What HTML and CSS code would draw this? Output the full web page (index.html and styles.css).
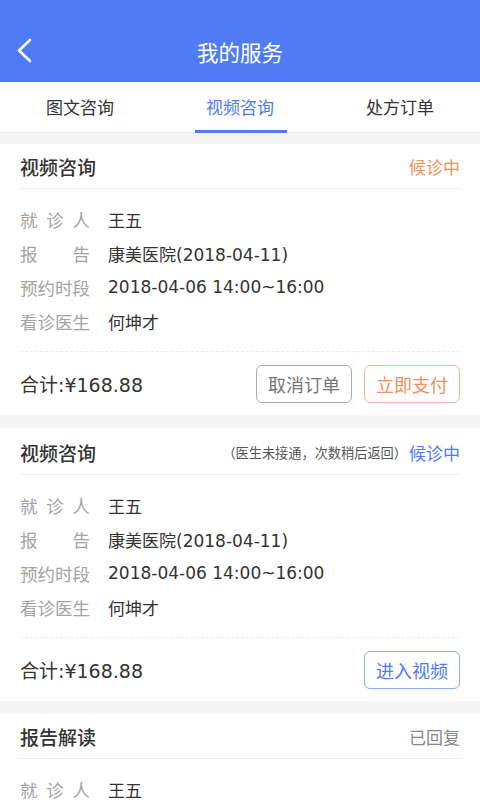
FILE: index.html
```html
<!DOCTYPE html>
<html lang="zh-CN">
<head>
<meta charset="utf-8">
<title>我的服务</title>
<link rel="stylesheet" href="styles.css">
</head>
<body>
<div class="app">
  <header class="topbar">
    <svg class="back" width="20" height="30" viewBox="0 0 20 30"><polyline points="13,2 2,12.5 13,23" fill="none" stroke="#fff" stroke-width="2.6" stroke-linecap="round" stroke-linejoin="round"/></svg>
    <h1 class="title">我的服务</h1>
  </header>
  <nav class="tabs">
    <div class="tab">图文咨询</div>
    <div class="tab active">视频咨询<span class="bar"></span></div>
    <div class="tab">处方订单</div>
  </nav>
  <main class="list">
    <section class="card">
      <div class="card-head">
        <span class="card-title">视频咨询</span>
        <span class="status orange">候诊中</span>
      </div>
      <div class="rows">
        <div class="row"><span class="label">就诊人</span><span class="value">王五</span></div>
        <div class="row"><span class="label">报告</span><span class="value">康美医院(2018-04-11)</span></div>
        <div class="row"><span class="label">预约时段</span><span class="value">2018-04-06 14:00~16:00</span></div>
        <div class="row"><span class="label">看诊医生</span><span class="value">何坤才</span></div>
      </div>
      <div class="card-foot">
        <span class="total">合计:¥168.88</span>
        <div class="btns">
          <span class="btn gray">取消订单</span>
          <span class="btn orange-btn">立即支付</span>
        </div>
      </div>
    </section>
    <section class="card">
      <div class="card-head tall">
        <span class="card-title">视频咨询</span>
        <span class="status-wrap"><span class="note">（医生未接通，次数稍后返回）</span><span class="status blue">候诊中</span></span>
      </div>
      <div class="rows">
        <div class="row"><span class="label">就诊人</span><span class="value">王五</span></div>
        <div class="row"><span class="label">报告</span><span class="value">康美医院(2018-04-11)</span></div>
        <div class="row"><span class="label">预约时段</span><span class="value">2018-04-06 14:00~16:00</span></div>
        <div class="row"><span class="label">看诊医生</span><span class="value">何坤才</span></div>
      </div>
      <div class="card-foot">
        <span class="total">合计:¥168.88</span>
        <div class="btns">
          <span class="btn blue-btn">进入视频</span>
        </div>
      </div>
    </section>
    <section class="card">
      <div class="card-head">
        <span class="card-title">报告解读</span>
        <span class="status gray-text">已回复</span>
      </div>
      <div class="rows">
        <div class="row"><span class="label">就诊人</span><span class="value">王五</span></div>
      </div>
    </section>
  </main>
</div>
</body>
</html>
```
FILE: styles.css
```css
* { box-sizing: border-box; margin: 0; padding: 0; }
html, body { width: 480px; height: 800px; overflow: hidden; }
body {
  font-family: "Noto Sans CJK SC", "Noto Sans", sans-serif;
  background: #f5f5f5;
  color: #333;
}
.app { display: flex; flex-direction: column; }
.topbar {
  height: 82px;
  background: #4f7bf6;
  display: flex;
  align-items: flex-end;
  justify-content: center;
  padding-bottom: 15px;
  position: relative;
}
.back { position: absolute; left: 17px; top: 38px; }
.title {
  font-size: 21.5px;
  font-weight: 400;
  color: #fff;
  line-height: 30px;
}
.tabs {
  height: 51px;
  background: #fff;
  display: flex;
  border-bottom: 1px solid #ebebeb;
}
.tab {
  flex: 1;
  display: flex;
  justify-content: center;
  align-items: center;
  font-size: 17px;
  color: #333;
  position: relative;
  padding-bottom: 2px;
}
.tab.active { color: #4f7bf6; }
.tab .bar {
  position: absolute;
  left: 35px;
  right: 33px;
  bottom: -1px;
  height: 3px;
  background: #4f7bf6;
}
.list {
  padding-top: 11px;
  display: flex;
  flex-direction: column;
  gap: 13px;
}
.card {
  background: #fff;
  padding: 0 20px;
}
.card-head {
  height: 45px;
  display: flex;
  justify-content: space-between;
  align-items: center;
  border-bottom: 1px solid #eeeeee;
}
.card-head.tall { height: 47px; padding-top: 3px; }
.card-title { font-size: 19px; font-weight: 500; color: #333; }
.status { font-size: 17px; }
.status-wrap { display: flex; align-items: center; }
.note { font-size: 13.2px; color: #555; margin-right: 2px; }
.orange { color: #f0915a; }
.blue { color: #4f7bf6; }
.gray-text { color: #888; }
.rows { padding: 13px 0 13px; }
.row {
  display: flex;
  align-items: center;
  height: 34px;
  font-size: 17.5px;
}
.label {
  width: 70px;
  margin-right: 18px;
  color: #a3a3a3;
  text-align: justify;
  text-align-last: justify;
}
.value {
  color: #333;
  font-family: "DejaVu Sans", "Noto Sans CJK SC", sans-serif;
  font-size: 17px;
}
.card-foot {
  height: 64px;
  border-top: 1px dashed #ececec;
  display: flex;
  justify-content: space-between;
  align-items: center;
}
.total {
  font-family: "DejaVu Sans", "Noto Sans CJK SC", sans-serif;
  font-size: 19px;
  color: #333;
}
.btns { display: flex; gap: 12px; }
.btn {
  height: 38px;
  width: 96px;
  border-radius: 6px;
  border: 1px solid #aaa;
  font-size: 18px;
  display: flex;
  align-items: center;
  justify-content: center;
  color: #777;
}
.btn.orange-btn { border-color: #f3b690; color: #f0915a; }
.btn.blue-btn { border-color: #8ea8f3; color: #4f7bf6; }
```
